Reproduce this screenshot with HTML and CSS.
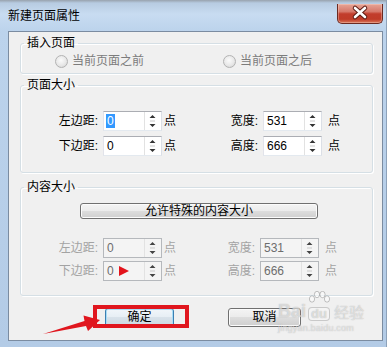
FILE: index.html
```html
<!DOCTYPE html>
<html lang="zh-CN">
  <head>
    <meta charset="UTF-8" />
    <title>新建页面属性</title>
    <link rel="stylesheet" href="styles.css">
  </head>
  <body>
    <div class="window">
      <div class="titlebar">
        <span class="title">新建页面属性</span>
        <div class="close-btn">
          <svg width="44" height="18" viewBox="0 0 44 18">
            <path d="M17 4 L27 13 M27 4 L17 13" stroke="#5a1a12" stroke-width="4.5" stroke-linecap="round" />
            <path d="M17 4 L27 13 M27 4 L17 13" stroke="#ffffff" stroke-width="2.6" stroke-linecap="round" />
          </svg>
        </div>
      </div>

      <div class="client">
        <fieldset class="group">
          <legend>插入页面</legend>
          <div class="radio-row">
            <label class="radio"><span class="radio-dot"></span>当前页面之前</label>
            <label class="radio"><span class="radio-dot"></span>当前页面之后</label>
          </div>
        </fieldset>

        <fieldset class="group group-page">
          <legend>页面大小</legend>
          <div class="size-grid">
            <span class="field-label">左边距:</span>
            <div class="spin">
              <span class="spin-value"><span class="sel">0</span></span>
              <span class="spin-btns"><svg width="15" height="18" viewBox="0 0 15 18"><path d="M4.5 6 L7.5 3 L10.5 6 Z M4.5 12 L7.5 15 L10.5 12 Z" fill="#333" /><path d="M5 9 H10" stroke="#c8c8c8" /></svg></span>
            </div>
            <span class="unit">点</span>
            <span class="field-label">宽度:</span>
            <div class="spin">
              <span class="spin-value">531</span>
              <span class="spin-btns"><svg width="15" height="18" viewBox="0 0 15 18"><path d="M4.5 6 L7.5 3 L10.5 6 Z M4.5 12 L7.5 15 L10.5 12 Z" fill="#333" /><path d="M5 9 H10" stroke="#c8c8c8" /></svg></span>
            </div>
            <span class="unit unit-right">点</span>

            <span class="field-label">下边距:</span>
            <div class="spin">
              <span class="spin-value">0</span>
              <span class="spin-btns"><svg width="15" height="18" viewBox="0 0 15 18"><path d="M4.5 6 L7.5 3 L10.5 6 Z M4.5 12 L7.5 15 L10.5 12 Z" fill="#333" /><path d="M5 9 H10" stroke="#c8c8c8" /></svg></span>
            </div>
            <span class="unit">点</span>
            <span class="field-label">高度:</span>
            <div class="spin">
              <span class="spin-value">666</span>
              <span class="spin-btns"><svg width="15" height="18" viewBox="0 0 15 18"><path d="M4.5 6 L7.5 3 L10.5 6 Z M4.5 12 L7.5 15 L10.5 12 Z" fill="#333" /><path d="M5 9 H10" stroke="#c8c8c8" /></svg></span>
            </div>
            <span class="unit unit-right">点</span>
          </div>
        </fieldset>

        <fieldset class="group group-content">
          <legend>内容大小</legend>
          <div class="btn wide-btn">允许特殊的内容大小</div>
          <div class="size-grid is-disabled">
            <span class="field-label">左边距:</span>
            <div class="spin">
              <span class="spin-value">0</span>
              <span class="spin-btns"><svg width="15" height="18" viewBox="0 0 15 18"><path d="M4.5 6 L7.5 3 L10.5 6 Z M4.5 12 L7.5 15 L10.5 12 Z" fill="#444" /><path d="M5 9 H10" stroke="#c8c8c8" /></svg></span>
            </div>
            <span class="unit">点</span>
            <span class="field-label">宽度:</span>
            <div class="spin">
              <span class="spin-value">531</span>
              <span class="spin-btns"><svg width="15" height="18" viewBox="0 0 15 18"><path d="M4.5 6 L7.5 3 L10.5 6 Z M4.5 12 L7.5 15 L10.5 12 Z" fill="#444" /><path d="M5 9 H10" stroke="#c8c8c8" /></svg></span>
            </div>
            <span class="unit unit-right">点</span>

            <span class="field-label">下边距:</span>
            <div class="spin">
              <span class="spin-value">0<svg class="pointer" width="10" height="10" viewBox="0 0 10 10"><path d="M0 0 L10 5 L0 10 Z" fill="#e3141c" /></svg></span>
              <span class="spin-btns"><svg width="15" height="18" viewBox="0 0 15 18"><path d="M4.5 6 L7.5 3 L10.5 6 Z M4.5 12 L7.5 15 L10.5 12 Z" fill="#444" /><path d="M5 9 H10" stroke="#c8c8c8" /></svg></span>
            </div>
            <span class="unit">点</span>
            <span class="field-label">高度:</span>
            <div class="spin">
              <span class="spin-value">666</span>
              <span class="spin-btns"><svg width="15" height="18" viewBox="0 0 15 18"><path d="M4.5 6 L7.5 3 L10.5 6 Z M4.5 12 L7.5 15 L10.5 12 Z" fill="#444" /><path d="M5 9 H10" stroke="#c8c8c8" /></svg></span>
            </div>
            <span class="unit unit-right">点</span>
          </div>
        </fieldset>

        <div class="actions">
          <div class="btn btn-ok">确定</div>
          <div class="btn btn-cancel">取消</div>
        </div>
      </div>

      <!-- screenshot annotations -->
      <svg class="annotations" width="387" height="347" viewBox="0 0 387 347">
        <rect x="95" y="307" width="92" height="19" fill="none" stroke="#e0161e" stroke-width="4" />
        <path d="M43 334 L84.5 321 L83.5 315.5 L100 320 L88 331 L86 326 Z" fill="#e0161e" />
      </svg>

      <div class="watermark">
        <div class="wm-line">
          <span class="wm-bai">Bai</span>
          <span class="wm-paw">
            <svg width="24" height="16" viewBox="0 0 24 16">
              <ellipse cx="5" cy="8" rx="2.6" ry="3.2" />
              <ellipse cx="10" cy="3.5" rx="2.6" ry="3.2" />
              <ellipse cx="15.5" cy="3.5" rx="2.6" ry="3.2" />
              <ellipse cx="20" cy="8" rx="2.6" ry="3.2" />
            </svg>
            <span class="wm-du">du</span>
          </span>
          <span class="wm-jy">经验</span>
        </div>
        <div class="wm-url">jingyan.baidu.com</div>
      </div>
    </div>
  </body>
</html>
```

FILE: styles.css
```css
body {
  margin: 0;
  font-family: "Liberation Sans", "Noto Sans CJK SC", sans-serif;
  font-size: 12px;
  color: #000;
}
.window {
  position: relative;
  width: 387px;
  height: 347px;
  box-sizing: border-box;
  padding: 0 3px 0 8px;
  border-right: 1px solid #8da2ba;
  background: linear-gradient(to bottom, #98a2ad 0, #b7cbe1 3px, #c8dcf1 14px, #bcd3ec 31px, #b3cbe6 100%);
  overflow: hidden;
}
.titlebar {
  display: flex;
  justify-content: space-between;
  height: 31px;
}
.title {
  padding-top: 9px;
  line-height: 14px;
}
.close-btn {
  margin-top: 4px;
  width: 46px;
  height: 20px;
  box-sizing: border-box;
  border: 1px solid #6b2a22;
  border-top: none;
  border-radius: 0 0 5px 5px;
  background: linear-gradient(to bottom, #e6a596 0, #d6786a 40%, #c23d2c 52%, #bf3b28 80%, #d9785c 100%);
  box-shadow: inset 0 0 0 1px rgba(255, 220, 210, 0.35);
}
.close-btn svg {
  display: block;
}
.client {
  height: 310px;
  box-sizing: border-box;
  border: 1px solid #7b8ca1;
  background: #f0f0f0;
  padding-top: 4px;
}
.group {
  margin: 0 9px 0 11px;
  padding: 0;
  min-width: 0;
  border: 1px solid #d5dfe5;
  border-radius: 3px;
  box-shadow: inset 1px 1px 0 #fff, 1px 1px 0 #fff;
}
.group legend {
  margin-left: 3px;
  padding: 0 3px;
  line-height: 14px;
}
.group-page {
  margin-top: 4px;
}
.group-content {
  margin-top: 7px;
}
.radio-row {
  display: grid;
  grid-template-columns: 168px auto;
  padding: 4px 0 5px 34px;
}
.radio {
  display: flex;
  align-items: center;
  line-height: 14px;
  color: #7c7c7c;
}
.radio-dot {
  width: 13px;
  height: 13px;
  box-sizing: border-box;
  margin-right: 4px;
  border: 1px solid #b3b3b3;
  border-radius: 50%;
  background: radial-gradient(circle at 45% 40%, #fbfbfb 0, #e8e8e8 55%, #d0d0d0 100%);
}
.size-grid {
  display: grid;
  grid-template-columns: 80px 59px 22px 73px 59px auto;
  grid-auto-rows: 20px;
  column-gap: 2px;
  row-gap: 5px;
  padding: 19px 0 16px;
}
.size-grid.is-disabled {
  grid-template-columns: 80px 59px 22px 70px 59px auto;
  row-gap: 3px;
  padding: 19px 0 14px;
  color: #a3a3a3;
}
.field-label {
  text-align: right;
  padding-right: 3px;
  line-height: 20px;
}
.unit {
  line-height: 20px;
}
.unit-right {
  padding-left: 4px;
}
.spin {
  display: flex;
  height: 20px;
  box-sizing: border-box;
  border: 1px solid;
  border-color: #abadb3 #dbdfe6 #e3e9ef #e2e3ea;
  background: #fff;
}
.spin-value {
  flex: 1;
  padding-left: 3px;
  line-height: 18px;
  color: #000;
  white-space: nowrap;
}
.sel {
  display: inline-block;
  margin-left: -1px;
  padding: 0 1px;
  line-height: 14px;
  background: #3399ff;
  color: #fff;
}
.spin-btns {
  width: 15px;
  margin-right: 1px;
  border-left: 1px solid #e2e2e2;
}
.spin-btns svg {
  display: block;
}
.is-disabled .spin {
  border-color: #b5b8bc;
  background: #f4f4f4;
}
.is-disabled .spin-value {
  color: #6d6d6d;
}
.pointer {
  margin-left: 5px;
  vertical-align: -1px;
}
.btn {
  box-sizing: border-box;
  border: 1px solid #707070;
  border-radius: 3px;
  background: linear-gradient(to bottom, #f4f4f4 0, #ebebeb 50%, #dddddd 50%, #cfcfcf 100%);
  box-shadow: inset 0 0 0 1px #fbfbfb;
  text-align: center;
}
.wide-btn {
  margin: 9px 0 0 59px;
  width: 238px;
  height: 16px;
  line-height: 14px;
}
.actions {
  display: flex;
  gap: 54px;
  padding: 12px 0 0 96px;
}
.btn-ok,
.btn-cancel {
  height: 19px;
  line-height: 17px;
}
.btn-ok {
  width: 69px;
  border-color: #3c7fb1;
  box-shadow: inset 0 0 0 1px #a8dcf6;
  background: linear-gradient(to bottom, #f1f6fa 0, #e6eef4 50%, #d8e2ea 50%, #ccd8e2 100%);
}
.btn-cancel {
  width: 73px;
}
.annotations {
  position: absolute;
  left: 0;
  top: 0;
  pointer-events: none;
}
.watermark {
  position: absolute;
  left: 278px;
  top: 291px;
  width: 90px;
  color: rgba(255, 255, 255, 0.55);
  text-shadow: 0 0 1px rgba(110, 110, 110, 0.55);
  pointer-events: none;
}
.wm-line {
  display: flex;
  align-items: flex-end;
}
.wm-bai {
  font-size: 18px;
  font-weight: bold;
  line-height: 19px;
}
.wm-paw {
  display: flex;
  flex-direction: column;
  align-items: center;
  margin-left: 1px;
}
.wm-paw svg {
  fill: rgba(255, 255, 255, 0.55);
  stroke: rgba(110, 110, 110, 0.4);
}
.wm-du {
  padding: 0 2px;
  border: 1px solid rgba(120, 120, 120, 0.35);
  border-radius: 4px;
  font-size: 13px;
  font-weight: bold;
  line-height: 12px;
  background: rgba(255, 255, 255, 0.25);
}
.wm-jy {
  margin-left: 3px;
  font-size: 15px;
  line-height: 17px;
}
.wm-url {
  margin-top: 2px;
  font-size: 9px;
  line-height: 10px;
  letter-spacing: 0.2px;
}
```
